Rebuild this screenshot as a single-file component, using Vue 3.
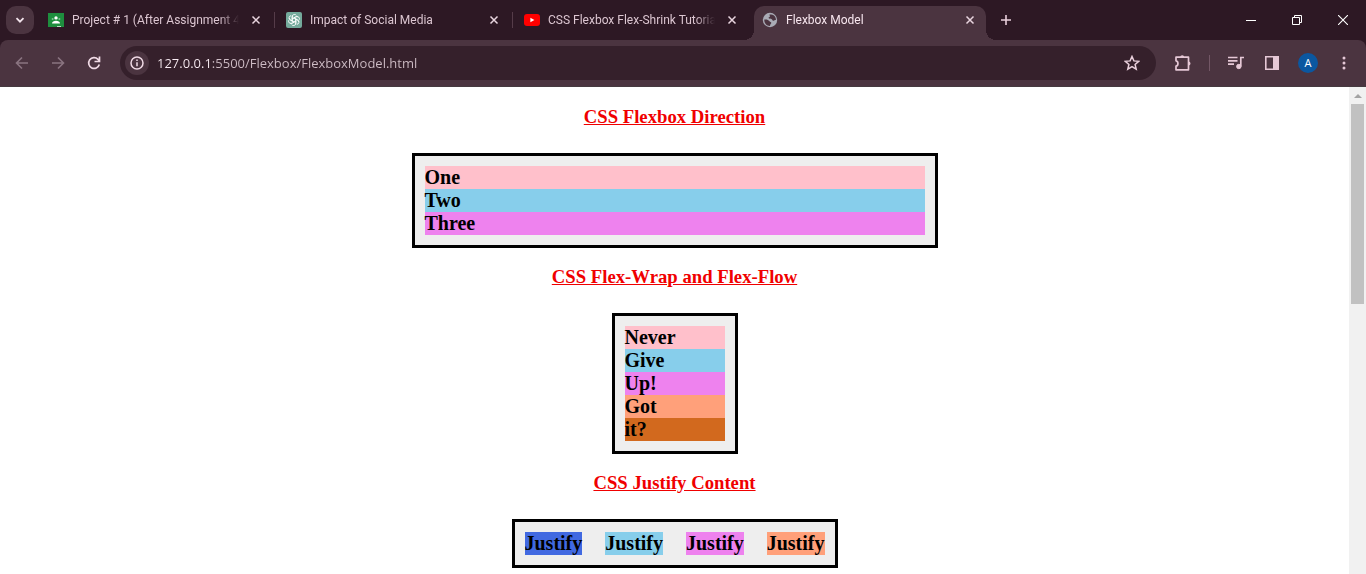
<script setup>
import { ref } from 'vue'

const tabs = [
  { title: 'Project # 1 (After Assignment 4)', icon: 'classroom' },
  { title: 'Impact of Social Media', icon: 'gpt' },
  { title: 'CSS Flexbox Flex-Shrink Tutorial', icon: 'youtube' },
  { title: 'Flexbox Model', icon: 'globe', active: true }
]
const url = ref('127.0.0.1:5500/Flexbox/FlexboxModel.html')
const petals = [0, 60, 120, 180, 240, 300]

const sections = [
  {
    title: 'CSS Flexbox Direction',
    kind: 'wide',
    items: [['One', 'pink'], ['Two', 'sky'], ['Three', 'violet']]
  },
  {
    title: 'CSS Flex-Wrap and Flex-Flow',
    kind: 'narrow',
    items: [['Never', 'pink'], ['Give', 'sky'], ['Up!', 'violet'], ['Got', 'salmon'], ['it?', 'chocolate']]
  },
  {
    title: 'CSS Justify Content',
    kind: 'row',
    items: [['Justify', 'royal'], ['Justify', 'sky'], ['Justify', 'violet'], ['Justify', 'salmon']]
  }
]
</script>

<template>
  <div class="browser">
    <header class="strip">
      <button class="search-tabs" aria-label="Search tabs">
        <svg width="12" height="12" viewBox="0 0 12 12"><path d="M2.5 4.2 6 7.7l3.5-3.5" fill="none" stroke="#f3e4ec" stroke-width="1.8" /></svg>
      </button>
      <nav class="tabs">
        <div v-for="tab in tabs" :key="tab.title" class="tab" :class="{ active: tab.active }">
          <svg v-if="tab.icon === 'classroom'" class="fav" viewBox="0 0 16 16">
            <path d="M0 1h16v14H0z" fill="#1e8e3e" />
            <circle cx="8" cy="5.9" r="1.7" fill="#fff" />
            <circle cx="4.6" cy="7" r="1" fill="#7cc492" />
            <circle cx="11.4" cy="7" r="1" fill="#7cc492" />
            <path d="M4 11.4c0-1.700 2-2.700 4-2.700s4 1 4 2.700z" fill="#fff" />
            <path d="M9 14h4v1H9z" fill="#b7dfc2" />
          </svg>
          <svg v-else-if="tab.icon === 'gpt'" class="fav" viewBox="0 0 16 16">
            <rect width="16" height="16" rx="2" fill="#74aa9c" />
            <g fill="none" stroke="#fff" stroke-width="0.8">
              <path v-for="a in petals" :key="a" :transform="`rotate(${a} 8 8)`" d="M6.200 9V4.700a2.300 2.300 0 0 1 4.200-1.300M6.200 6.900l3.500-2a2.200 2.200 0 0 1 2.200 0" />
            </g>
          </svg>
          <svg v-else-if="tab.icon === 'youtube'" class="fav" viewBox="0 0 16 16">
            <rect y="2" width="16" height="12" rx="3" fill="#f00" />
            <path d="M6.400 5.700v4.600l4-2.300z" fill="#fff" />
          </svg>
          <svg v-else class="fav" viewBox="0 0 16 16">
            <circle cx="8" cy="8" r="7.200" fill="#a9abb5" />
            <path d="M2.300 7.500c2.200-.4 4.200.2 4.900 1.500.5 1.100 2.200.6 2.100 2-.1 1-1.200 1-1.300 2.900-3 .1-5.900-2.400-5.700-6.400zM7.500 2.200c-.3 1.300.7 1.300.4 2.200-.3.8-1.600.6-1.300 1.700.3 1 2.400.3 3.200 1.100.7.700.6 1.500 1.700 1.600.9.100 1.400-.9 2.400-.7.3-3-1.900-5.800-6.400-5.900z" fill="#4b3440" />
          </svg>
          <span class="title">{{ tab.title }}</span>
          <button class="close" :aria-label="`Close ${tab.title}`">
            <svg width="10" height="10" viewBox="0 0 10 10"><path d="m1.500 1.500 7 7m0-7-7 7" stroke="#e9d5df" stroke-width="1.500" /></svg>
          </button>
        </div>
      </nav>
      <button class="new-tab" aria-label="New tab">
        <svg width="12" height="12" viewBox="0 0 12 12"><path d="M6 1v10M1 6h10" stroke="#e9cfdb" stroke-width="1.600" /></svg>
      </button>
      <div class="window-controls">
        <button aria-label="Minimize"><svg width="10" height="10" viewBox="0 0 10 10"><path d="M0 5.500h10" stroke="#fff" /></svg></button>
        <button aria-label="Restore"><svg width="10" height="10" viewBox="0 0 10 10" fill="none" stroke="#fff"><path d="M.5 2.500h7v7h-7zM2.500 2.500v-2h7v7h-2" /></svg></button>
        <button aria-label="Close window"><svg width="10" height="10" viewBox="0 0 10 10"><path d="m0 0 10 10M10 0 0 10" stroke="#fff" stroke-width="1.100" /></svg></button>
      </div>
    </header>

    <div class="toolbar-back">
      <div class="toolbar">
        <button class="tool" aria-label="Back">
          <svg class="ic" viewBox="0 0 16 16" fill="none" stroke="#8a7480" stroke-width="1.600"><path d="M14 8H3M8 2.500 2.500 8 8 13.500" /></svg>
        </button>
        <button class="tool" aria-label="Forward">
          <svg class="ic" viewBox="0 0 16 16" fill="none" stroke="#8a7480" stroke-width="1.600"><path d="M2 8h11M8 2.500 13.500 8 8 13.500" /></svg>
        </button>
        <button class="tool" aria-label="Reload">
          <svg class="ic" viewBox="0 0 16 16" fill="none" stroke="#f0dae5" stroke-width="1.700"><path d="M13.300 9.500A5.400 5.400 0 1 1 12 4.300l1.300 1.400M13.500 1.500v5h-5" /></svg>
        </button>
        <div class="address">
          <button class="info" aria-label="View site information">
            <svg width="16" height="16" viewBox="0 0 16 16"><circle cx="8" cy="8" r="6" fill="none" stroke="#f0dae5" stroke-width="1.500" /><path d="M8 7.200v4M8 4.500V6" stroke="#f0dae5" stroke-width="1.500" /></svg>
          </button>
          <input v-model="url" class="url" type="text" aria-label="Address" spellcheck="false">
          <button class="star" aria-label="Bookmark this tab">
            <svg class="ic" viewBox="0 0 16 16"><path d="m8 1.500 1.900 4.400 4.800.4-3.600 3.200 1.100 4.700L8 11.700l-4.200 2.500 1.100-4.700-3.600-3.200 4.800-.4z" fill="none" stroke="#ead0dc" stroke-width="1.500" /></svg>
          </button>
        </div>
        <button class="tool" aria-label="Extensions">
          <svg width="18" height="18" viewBox="0 0 18 18"><path d="M2 3.200h12.500v12.600H2v-3.600c2.600-.4 2.600-5 0-5.400z" fill="none" stroke="#e6c8d6" stroke-width="1.700" stroke-linejoin="round" /><path d="M6.200 3.200a2 2 0 0 1 4 0zM14.500 7.500a2 2 0 0 1 0 4z" fill="#e6c8d6" /></svg>
        </button>
        <span class="divider"></span>
        <button class="tool" aria-label="Media controls">
          <svg class="ic" viewBox="0 0 16 16" fill="none" stroke="#e6c8d6" stroke-width="1.700"><path d="M0 2.500h9.500M0 5.800h9.500M0 9.100h6M12.800 11.500V2.500H16" /><circle cx="10.800" cy="11.500" r="2.200" fill="#e6c8d6" stroke-width="1" /></svg>
        </button>
        <button class="tool" aria-label="Side panel">
          <svg class="ic" viewBox="0 0 16 16"><path d="M1.800 1.800h12.400v12.400H1.800z" fill="none" stroke="#e6c8d6" stroke-width="1.600" /><path d="M9 1.500h5.500v13H9z" fill="#e6c8d6" /></svg>
        </button>
        <button class="tool" aria-label="Profile"><span class="avatar">A</span></button>
        <button class="tool" aria-label="Menu">
          <svg class="ic" viewBox="0 0 16 16" fill="#e6c8d6"><circle cx="8" cy="3" r="1.500" /><circle cx="8" cy="8" r="1.500" /><circle cx="8" cy="13" r="1.500" /></svg>
        </button>
      </div>
    </div>

    <div class="viewport">
      <main class="page">
        <section v-for="s in sections" :key="s.title">
          <h3>{{ s.title }}</h3>
          <div class="box" :class="s.kind">
            <div v-for="(item, i) in s.items" :key="i" :class="item[1]">{{ item[0] }}</div>
          </div>
        </section>
      </main>
      <div class="scrollbar" aria-hidden="true">
        <div class="arrow"><svg width="8" height="4" viewBox="0 0 8 4"><path d="M0 4 4 0l4 4z" fill="#a3a3a3" /></svg></div>
        <div class="thumb"></div>
      </div>
    </div>
  </div>
</template>

<style>
body { margin: 0; background: #fff; }
</style>

<style scoped>
.browser {
  display: flex;
  flex-direction: column;
  height: 100vh;
  overflow: hidden;
  font-family: "Open Sans", "Noto Sans", sans-serif;
}
button {
  display: flex;
  flex: none;
  align-items: center;
  justify-content: center;
  padding: 0;
  border: 0;
  background: none;
  font: inherit;
}
.strip {
  display: flex;
  flex: none;
  height: 40px;
  background: #2d1824;
}
.search-tabs {
  width: 28px;
  height: 28px;
  margin: 6px;
  border-radius: 10px;
  background: #4b3440;
}
.tabs {
  display: flex;
  flex: 0 1 946px;
  gap: 6px;
  min-width: 0;
  padding-top: 6px;
}
.tab {
  position: relative;
  display: flex;
  flex: 1 1 0;
  align-items: center;
  min-width: 0;
  box-sizing: border-box;
  height: 34px;
  padding: 0 8px 6px;
}
.tab:not(.active):not(:nth-child(3))::after {
  content: "";
  position: absolute;
  top: 6px;
  right: -3px;
  width: 1px;
  height: 16px;
  background: #553c49;
}
.tab.active {
  border-radius: 10px 10px 0 0;
  background: #4b3440;
}
.tab.active::before,
.tab.active::after {
  content: "";
  position: absolute;
  bottom: 0;
  width: 10px;
  height: 10px;
}
.tab.active::before {
  left: -10px;
  background: radial-gradient(circle at 0 0, transparent 10px, #4b3440 10px);
}
.tab.active::after {
  right: -10px;
  background: radial-gradient(circle at 100% 0, transparent 10px, #4b3440 10px);
}
.fav {
  flex: none;
  width: 16px;
  height: 16px;
}
.title {
  flex: 1;
  min-width: 0;
  margin: 0 9px 0 8px;
  overflow: hidden;
  color: #dcc6d1;
  font-family: Roboto, "Open Sans", sans-serif;
  font-size: 12px;
  line-height: 16px;
  white-space: nowrap;
  mask-image: linear-gradient(90deg, #000 calc(100% - 20px), transparent);
}
.active .title { color: #f7e6ee; }
.close { width: 16px; height: 16px; }
.new-tab {
  width: 28px;
  height: 28px;
  margin: 6px;
}
.window-controls {
  display: flex;
  margin-left: auto;
}
.window-controls button { width: 46px; height: 40px; }
.toolbar-back { flex: none; background: #2d1824; }
.toolbar {
  display: flex;
  align-items: center;
  gap: 2px;
  box-sizing: border-box;
  height: 47px;
  padding: 0 5px;
  border-bottom: 1px solid #463a40;
  border-radius: 8px 8px 0 0;
  background: #4b3440;
}
.tool { width: 34px; height: 34px; }
.ic { width: 16px; height: 16px; }
.address {
  display: flex;
  flex: 1;
  align-items: center;
  min-width: 0;
  height: 34px;
  margin: 0 8px 0 7px;
  border-radius: 17px;
  background: #35202b;
}
.info {
  width: 24px;
  height: 24px;
  margin: 0 8px 0 5px;
  border-radius: 12px;
  background: #4b3440;
}
.url {
  flex: 1;
  min-width: 0;
  padding: 0;
  border: 0;
  outline: 0;
  background: linear-gradient(90deg, #fbeef5 54px, #cfbdc6 54px);
  background-clip: text;
  color: transparent;
  font: 13px/20px "Open Sans", "Noto Sans", sans-serif;
}
.star { width: 34px; height: 34px; margin-right: 7px; }
.divider {
  width: 1px;
  height: 16px;
  margin: 0 7px;
  background: #735766;
}
.avatar {
  width: 20px;
  height: 20px;
  border-radius: 50%;
  background: #0b57a0;
  color: #fff;
  font-size: 11px;
  line-height: 20px;
  text-align: center;
}
.viewport {
  display: flex;
  flex: 1;
  min-height: 0;
}
.page {
  flex: 1;
  min-width: 0;
  overflow: hidden;
  padding-top: 1px;
  font-family: "Liberation Serif", serif;
  font-weight: bold;
}
h3 {
  margin: 0;
  padding: 18px 0 25px;
  color: #f00000;
  line-height: 22px;
  text-align: center;
  text-decoration: underline;
}
.box {
  display: flex;
  flex-direction: column;
  width: 500px;
  margin: 0 auto;
  padding: 10px;
  border: 3px solid #000;
  background: #eee;
  color: #000;
  font-size: 20px;
  line-height: normal;
}
.narrow { width: 100px; }
.row {
  flex-direction: row;
  justify-content: space-between;
  width: 300px;
}
.pink { background: pink; }
.sky { background: skyblue; }
.violet { background: violet; }
.salmon { background: lightsalmon; }
.chocolate { background: chocolate; }
.royal { background: royalblue; }
.scrollbar {
  flex: none;
  width: 13px;
  padding: 0 2px;
  background: #f1f1f1;
}
.arrow {
  display: flex;
  align-items: center;
  justify-content: center;
  height: 17px;
}
.thumb { height: 200px; background: #c1c1c1; }
</style>
